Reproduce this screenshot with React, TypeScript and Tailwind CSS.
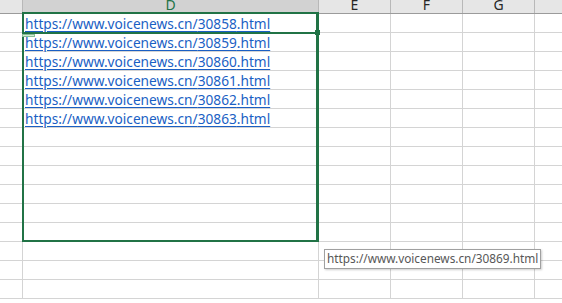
import React from 'react';

const cols = [
  { key: 'C', w: 'w-[23px]', label: '' },
  { key: 'D', w: 'w-[296px]', label: 'D' },
  { key: 'E', w: 'w-[72px]', label: 'E' },
  { key: 'F', w: 'w-[72px]', label: 'F' },
  { key: 'G', w: 'w-[72px]', label: 'G' },
  { key: 'H', w: 'w-[72px]', label: '' },
];

const links = [30858, 30859, 30860, 30861, 30862, 30863];

export default function App() {
  const rows = Array.from({ length: 15 });

  return (
    <div className="relative w-[562px] h-[303px] overflow-hidden bg-white font-['Noto_Sans','Liberation_Sans',sans-serif]">
      {/* Column headers */}
      <div className="flex h-[14px] border-b border-[#9b9b9b]">
        {cols.map((c) => (
          <div
            key={c.key}
            className={`${c.w} shrink-0 h-[13px] border-r border-[#b8b8b8] flex items-end justify-center overflow-hidden text-[14px] leading-[17px] ${
              c.key === 'D' ? 'bg-[#d2d2d2] text-[#217346]' : 'bg-[#e6e6e6] text-[#262626]'
            }`}
          >
            {c.label}
          </div>
        ))}
      </div>

      {/* Grid */}
      {rows.map((_, r) => (
        <div key={r} className="flex h-[19px] border-b border-[#d4d4d4]">
          {cols.map((c) => (
            <div key={c.key} className={`${c.w} shrink-0 h-[18px] border-r border-[#d4d4d4] overflow-visible whitespace-nowrap`}>
              {c.key === 'D' && r < links.length && (
                <span className="block pl-[2px] text-[13.7px] leading-[20px] text-[#1a5fc4] underline underline-offset-[2px]">
                  https://www.voicenews.cn/{links[r]}.html
                </span>
              )}
            </div>
          ))}
        </div>
      ))}

      {/* Selection range */}
      <div className="absolute left-[22px] top-[12px] w-[297px] h-[230px] border-2 border-r-[3px] border-[#217346]" />
      {/* Active cell bottom line + fill handle */}
      <div className="absolute left-[22px] top-[32px] w-[294px] h-[2px] bg-[#217346]" />
      <div className="absolute left-[315px] top-[30px] w-[5px] h-[5px] bg-[#217346]" />
      {/* Paste-option marker */}
      <div className="absolute left-[22px] top-[34px] w-[13px] h-[3px] bg-[#d5ead8] border border-[#86bf95]" />

      {/* Tooltip */}
      <div className="absolute left-[324px] top-[249px] h-[20px] px-[2px] bg-white border border-[#a0a0a0] shadow-[1px_1px_2px_rgba(0,0,0,0.2)] flex items-center text-[11.8px] text-[#575757] whitespace-nowrap">
        https://www.voicenews.cn/30869.html
      </div>
    </div>
  );
}
